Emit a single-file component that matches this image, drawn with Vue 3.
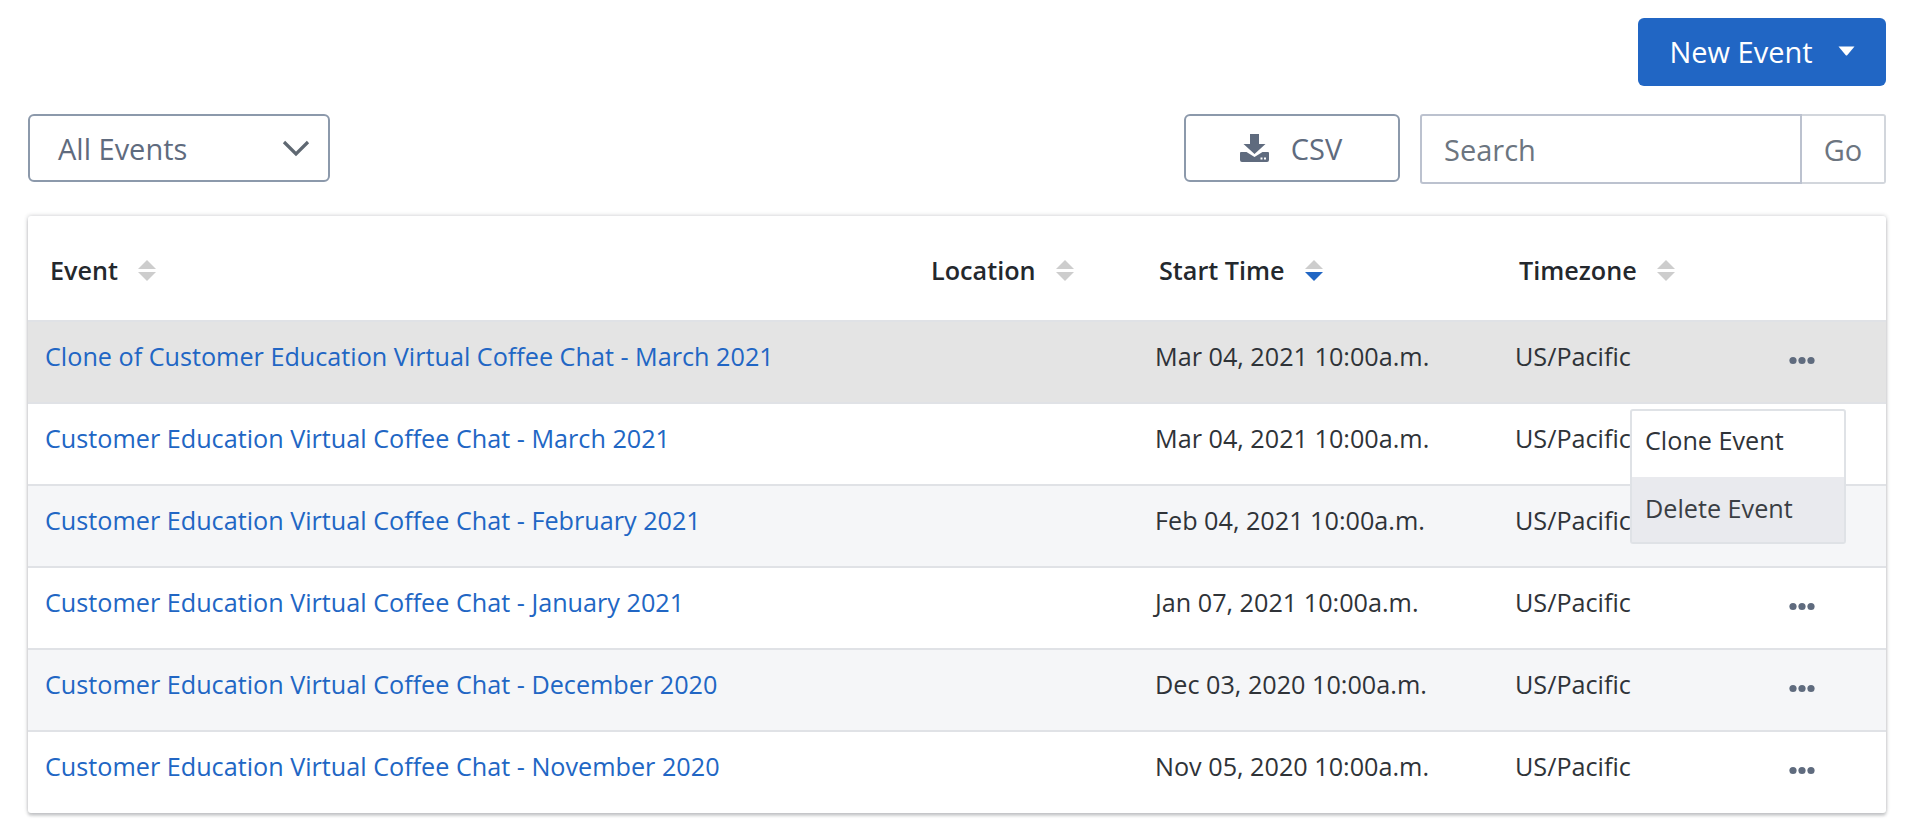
<script setup>
const headers = [
  { label: 'Event', active: false },
  { label: 'Location', active: false },
  { label: 'Start Time', active: true },
  { label: 'Timezone', active: false },
]
const rows = [
  { name: 'Clone of Customer Education Virtual Coffee Chat - March 2021', start: 'Mar 04, 2021 10:00a.m.', cls: 'hover', dots: true },
  { name: 'Customer Education Virtual Coffee Chat - March 2021', start: 'Mar 04, 2021 10:00a.m.', cls: '', dots: false },
  { name: 'Customer Education Virtual Coffee Chat - February 2021', start: 'Feb 04, 2021 10:00a.m.', cls: 'stripe', dots: false },
  { name: 'Customer Education Virtual Coffee Chat - January 2021', start: 'Jan 07, 2021 10:00a.m.', cls: '', dots: true },
  { name: 'Customer Education Virtual Coffee Chat - December 2020', start: 'Dec 03, 2020 10:00a.m.', cls: 'stripe', dots: true },
  { name: 'Customer Education Virtual Coffee Chat - November 2020', start: 'Nov 05, 2020 10:00a.m.', cls: 'last', dots: true },
]
</script>

<template>
  <div class="page">
    <div class="top">
      <button class="new">
        <span>New Event</span>
        <svg width="17" height="10" viewBox="0 0 17 10"><path d="M0.5 0.5H16.5L9.2 9.2Q8.5 9.8 7.8 9.2Z" fill="#fff" /></svg>
      </button>
    </div>
    <div class="bar">
      <div class="select">
        <span>All Events</span>
        <svg width="28" height="18" viewBox="0 0 28 18"><path d="M2 3L14 15L26 3" fill="none" stroke="#5f6872" stroke-width="3.2" /></svg>
      </div>
      <div class="right">
        <button class="csv">
          <svg width="29" height="28" viewBox="0 0 29 28">
            <path d="M10 0H19V10H25.5L14.5 20L3.5 10H10Z" fill="#5f6b7e" />
            <path d="M1 18H6.5L14.5 23L22.5 18H28Q29 18 29 19V26Q29 28 27 28H2Q0 28 0 26V19Q0 18 1 18Z" fill="#5f6b7e" />
            <rect x="20.5" y="23.5" width="2" height="2" fill="#fff" />
            <rect x="24" y="23.5" width="2" height="2" fill="#fff" />
          </svg>
          <span>CSV</span>
        </button>
        <div class="search">
          <div class="input">Search</div>
          <div class="go">Go</div>
        </div>
      </div>
    </div>
    <div class="table">
      <div class="row head">
        <div v-for="h in headers" :key="h.label" class="th">
          <span>{{ h.label }}</span>
          <svg class="sort" width="18" height="21" viewBox="0 0 18 21">
            <path d="M9 0L18 9H0Z" fill="#cdcdcd" />
            <path d="M0 12H18L9 21Z" :fill="h.active ? '#2166c4' : '#cdcdcd'" />
          </svg>
        </div>
      </div>
      <div v-for="r in rows" :key="r.name" class="row body" :class="r.cls">
        <div class="td first"><a class="link">{{ r.name }}</a></div>
        <div class="td"></div>
        <div class="td">{{ r.start }}</div>
        <div class="td tz">
          <span>US/Pacific</span>
          <svg v-if="r.dots" class="dots" width="26" height="9" viewBox="0 0 26 9">
            <circle cx="4" cy="4.5" r="3.6" fill="#5f6b7e" />
            <circle cx="13" cy="4.5" r="3.6" fill="#5f6b7e" />
            <circle cx="22" cy="4.5" r="3.6" fill="#5f6b7e" />
          </svg>
        </div>
      </div>
      <div class="menu">
        <div class="item">Clone Event</div>
        <div class="item sel">Delete Event</div>
      </div>
    </div>
  </div>
</template>

<style>
html, body { margin: 0; background: #fff; }
</style>

<style scoped>
.page {
  width: 1910px;
  height: 826px;
  box-sizing: border-box;
  padding: 18px 24px 0 28px;
  font-family: "Open Sans", "Noto Sans", sans-serif;
  font-size: 29px;
  color: #2f3338;
  overflow: hidden;
}
button { font: inherit; }
.top { display: flex; justify-content: flex-end; }
.new {
  width: 248px;
  height: 68px;
  border: 0;
  border-radius: 6px;
  background: #2166c4;
  color: #fff;
  display: flex;
  align-items: center;
  justify-content: center;
  gap: 25px;
  padding: 0 0 2px;
}
.bar {
  margin-top: 28px;
  display: flex;
  justify-content: space-between;
  align-items: flex-start;
}
.select {
  width: 302px;
  height: 68px;
  box-sizing: border-box;
  border: 2px solid #8c99ab;
  border-radius: 6px;
  padding: 0 18px 0 28px;
  display: flex;
  align-items: center;
  justify-content: space-between;
  color: #5f6b7e;
}
.right { display: flex; gap: 20px; }
.csv {
  width: 216px;
  height: 68px;
  box-sizing: border-box;
  background: #fff;
  border: 2px solid #8c99ab;
  border-radius: 6px;
  color: #5f6b7e;
  display: flex;
  align-items: center;
  justify-content: center;
  gap: 22px;
  padding: 0 2px 0 0;
}
.search { display: flex; width: 466px; height: 70px; }
.input {
  width: 382px;
  box-sizing: border-box;
  border: 2px solid #bcc2cf;
  border-radius: 3px 0 0 3px;
  padding: 0 22px;
  display: flex;
  align-items: center;
  color: #6c7580;
}
.go {
  flex: 1;
  box-sizing: border-box;
  border: 2px solid #d2d6dc;
  border-left: 0;
  border-radius: 0 3px 3px 0;
  display: flex;
  align-items: center;
  justify-content: center;
  color: #6c7580;
}
.table {
  position: relative;
  margin-top: 32px;
  width: 1858px;
  background: #fff;
  border-radius: 3px;
  box-shadow: 0 0 4px rgba(60, 64, 72, 0.3), 0 3px 3px rgba(60, 64, 72, 0.2);
}
.row {
  display: grid;
  grid-template-columns: 881px 228px 360px 389px;
  box-sizing: border-box;
}
.head { height: 104px; align-items: center; }
.th {
  padding: 4px 0 0 22px;
  display: flex;
  align-items: center;
  gap: 20px;
  font-weight: 600;
  font-size: 25.2px;
  color: #24282d;
}
.body {
  height: 82px;
  border-top: 2px solid #e0e2e6;
  align-items: center;
}
.body.last { height: 83px; }
.body.hover { background: #e4e4e4; border-top-color: #e0e2e6; }
.body.stripe { background: #f5f6f8; }
.td {
  padding: 0 0 13px 18px;
  white-space: nowrap;
  font-size: 25.2px;
}
.td.first { padding-left: 17px; }
.body.last .td { padding-bottom: 14px; }
.link { color: #2166c4; }
.tz { position: relative; }
.dots { position: absolute; left: 292px; top: 17px; }
.menu {
  position: absolute;
  left: 1602px;
  top: 193px;
  width: 216px;
  height: 135px;
  box-sizing: border-box;
  background: #fff;
  border: 2px solid #dfe2e6;
  border-radius: 3px;
  z-index: 2;
  font-size: 25.2px;
}
.item {
  height: 66px;
  padding: 0 0 9px 13px;
  display: flex;
  align-items: center;
  box-sizing: border-box;
}
.item.sel { height: 65px; padding-bottom: 3px; background: #e9eaee; color: #3a3e44; }
</style>
